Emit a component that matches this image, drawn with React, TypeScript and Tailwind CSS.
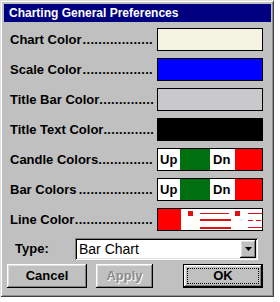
import React from "react";

const raised =
  "shadow-[inset_-1px_-1px_#000,inset_1px_1px_#fff,inset_-2px_-2px_#808080,inset_2px_2px_#dfdfdf]";

function Label({ text, dots }: { text: string; dots: number }) {
  return (
    <div className="flex justify-between w-[143px] mr-[4px] whitespace-nowrap text-[13px] font-bold text-black leading-[16px]">
      <span>{text}</span>
      <span className="tracking-[0.3px]">{".".repeat(dots)}</span>
    </div>
  );
}

function Row({ label, dots, children }: { label: string; dots: number; children: React.ReactNode }) {
  return (
    <div className="flex items-center h-[23px]">
      <Label text={label} dots={dots} />
      {children}
    </div>
  );
}

function Solid({ color }: { color: string }) {
  return <div className="w-[106px] h-[23px] border border-black" style={{ background: color }} />;
}

function UpDn() {
  return (
    <div className="w-[106px] h-[23px] border border-black flex text-[13px] font-bold text-black leading-[21px]">
      <div className="w-[22px] bg-white pl-[2px]">Up</div>
      <div className="w-[30px] bg-[#006f0f]" />
      <div className="w-[25px] bg-white pl-[3px]">Dn</div>
      <div className="flex-1 bg-[#ff0000]" />
    </div>
  );
}

function LineSwatch() {
  return (
    <div className="w-[106px] h-[23px] border border-black flex bg-white">
      <div className="w-[23px] bg-[#ff0000]" />
      <svg width="81" height="21" viewBox="0 0 81 21" className="block">
        <g fill="#e01010">
          <rect x="7" y="2" width="5" height="5" />
          <rect x="19" y="4" width="29" height="1" />
          <rect x="19" y="10" width="31" height="2" />
          <rect x="19" y="18" width="31" height="2" />
          <rect x="54" y="2" width="5" height="5" />
          <rect x="67" y="4" width="14" height="1" />
          <rect x="67" y="11" width="5" height="1" />
          <rect x="75" y="11" width="5" height="1" />
          <rect x="67" y="18" width="14" height="1" />
        </g>
      </svg>
    </div>
  );
}

export default function App() {
  return (
    <div className="w-[280px] h-[302px] bg-white font-['Liberation_Sans',Arial,sans-serif]">
      <div className="w-[274px] h-[297px] bg-[#c0c0c0] pt-[4px] pl-[4px] pr-[3px] flex flex-col shadow-[inset_1px_1px_#dfdfdf,inset_-1px_-1px_#404040,inset_2px_2px_#fff,inset_-2px_-2px_#909090]">
        <div className="h-[18px] bg-[#000080] text-white text-[12px] font-bold leading-[18px] pl-[5px] whitespace-nowrap">
          Charting General Preferences
        </div>
        <div className="flex flex-col gap-[7px] mt-[6px] pl-[6px]">
          <Row label="Chart Color" dots={18}>
            <Solid color="#f5f4e2" />
          </Row>
          <Row label="Scale Color" dots={18}>
            <Solid color="#0000ff" />
          </Row>
          <Row label="Title Bar Color" dots={14}>
            <Solid color="#c9c9cb" />
          </Row>
          <Row label="Title Text Color" dots={13}>
            <Solid color="#000000" />
          </Row>
          <Row label="Candle Colors" dots={14}>
            <UpDn />
          </Row>
          <Row label="Bar Colors" dots={19}>
            <UpDn />
          </Row>
          <Row label="Line Color" dots={20}>
            <LineSwatch />
          </Row>
          <div className="flex items-center h-[22px]">
            <div className="w-[65px] pl-[5px] text-[13px] font-bold text-black">Type:</div>
            <div className="w-[183px] h-[22px] bg-white flex items-stretch p-[2px] shadow-[inset_1px_1px_#808080,inset_-1px_-1px_#fff,inset_2px_2px_#000,inset_-2px_-2px_#dfdfdf]">
              <div className="flex-1 text-[14px] text-black leading-[18px] pl-[2px]">Bar Chart</div>
              <div className={`w-[16px] bg-[#c0c0c0] flex items-center justify-center ${raised}`}>
                <svg width="7" height="4" viewBox="0 0 7 4">
                  <polygon points="0,0 7,0 3.5,4" fill="#000" />
                </svg>
              </div>
            </div>
          </div>
        </div>
        <div className="flex mt-[4px] ml-[3px] h-[24px] text-[13px] font-bold">
          <div className={`w-[80px] flex items-center justify-center text-black ${raised}`}>Cancel</div>
          <div className={`w-[57px] ml-[9px] flex items-center justify-center text-[#8a8a8a] [text-shadow:1px_1px_0_#fff] ${raised}`}>
            Apply
          </div>
          <div className="w-[80px] ml-[30px] border border-black flex">
            <div className={`flex-1 flex p-[3px] ${raised}`}>
              <div className="flex-1 border border-dotted border-black flex items-center justify-center text-black">OK</div>
            </div>
          </div>
        </div>
      </div>
    </div>
  );
}
